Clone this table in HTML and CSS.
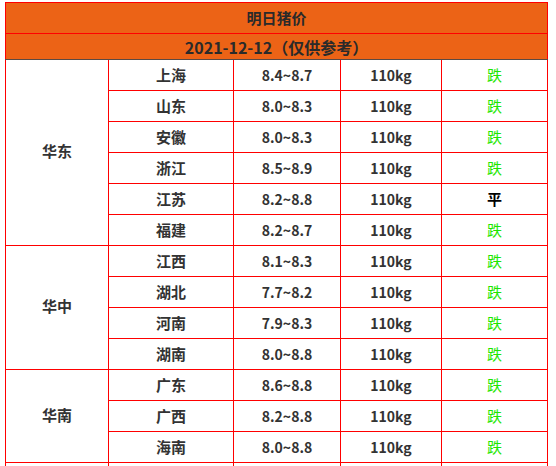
FILE: index.html
```html
<!DOCTYPE html>
<html lang="zh-CN">
<head>
<meta charset="utf-8">
<title>明日猪价</title>
<link rel="stylesheet" href="styles.css">
</head>
<body>
<div class="wrap">
<table class="price">
  <colgroup>
    <col class="c1"><col class="c2"><col class="c3"><col class="c4"><col class="c5">
  </colgroup>
  <thead>
    <tr class="h1"><th colspan="5">明日猪价</th></tr>
    <tr class="h2"><th colspan="5">2021-12-12（仅供参考）</th></tr>
  </thead>
  <tbody>
    <tr><td rowspan="6" class="region">华东</td><td class="prov">上海</td><td>8.4~8.7</td><td>110kg</td><td class="down">跌</td></tr>
    <tr><td class="prov">山东</td><td>8.0~8.3</td><td>110kg</td><td class="down">跌</td></tr>
    <tr><td class="prov">安徽</td><td>8.0~8.3</td><td>110kg</td><td class="down">跌</td></tr>
    <tr><td class="prov">浙江</td><td>8.5~8.9</td><td>110kg</td><td class="down">跌</td></tr>
    <tr><td class="prov">江苏</td><td>8.2~8.8</td><td>110kg</td><td class="flat">平</td></tr>
    <tr><td class="prov">福建</td><td>8.2~8.7</td><td>110kg</td><td class="down">跌</td></tr>
    <tr><td rowspan="4" class="region">华中</td><td class="prov">江西</td><td>8.1~8.3</td><td>110kg</td><td class="down">跌</td></tr>
    <tr><td class="prov">湖北</td><td>7.7~8.2</td><td>110kg</td><td class="down">跌</td></tr>
    <tr><td class="prov">河南</td><td>7.9~8.3</td><td>110kg</td><td class="down">跌</td></tr>
    <tr><td class="prov">湖南</td><td>8.0~8.8</td><td>110kg</td><td class="down">跌</td></tr>
    <tr><td rowspan="3" class="region">华南</td><td class="prov">广东</td><td>8.6~8.8</td><td>110kg</td><td class="down">跌</td></tr>
    <tr><td class="prov">广西</td><td>8.2~8.8</td><td>110kg</td><td class="down">跌</td></tr>
    <tr><td class="prov">海南</td><td>8.0~8.8</td><td>110kg</td><td class="down">跌</td></tr>
    <tr><td rowspan="3" class="region">华北</td><td class="prov">河北</td><td>8.3~8.6</td><td>110kg</td><td class="down">跌</td></tr>
    <tr><td class="prov">山西</td><td>8.0~8.4</td><td>110kg</td><td class="down">跌</td></tr>
    <tr><td class="prov">北京</td><td>8.4~8.7</td><td>110kg</td><td class="down">跌</td></tr>
  </tbody>
</table>
</div>
</body>
</html>
```
FILE: styles.css
```css
html, body {
  margin: 0;
  padding: 0;
  background: #ffffff;
}
.wrap {
  padding: 2px 0 0 5px;
}
.price {
  border-collapse: collapse;
  table-layout: fixed;
  width: 542px;
  font-family: "Noto Sans CJK SC", "Noto Sans", sans-serif;
  font-size: 14px;
  font-weight: bold;
  color: #333333;
}
.c1 { width: 103px; }
.c2 { width: 125px; }
.c3 { width: 107px; }
.c4 { width: 101px; }
.c5 { width: 106px; }
.price th,
.price td {
  border: 1px solid #ff0000;
  padding: 0;
  text-align: center;
  vertical-align: middle;
  line-height: 18px;
}
.price thead th {
  background: #ec6316;
  color: #2a2a2a;
}
.price .h1 th {
  height: 30px;
  font-size: 15px;
}
.price .h2 th {
  height: 25px;
  font-size: 16px;
  border-bottom-color: #5a4a44;
}
.price tbody td { height: 30px; }
.price .region,
.price .prov { font-size: 15px; }
.price .region { padding-bottom: 3px; }
.price .down { color: #1ee600; font-weight: normal; font-size: 15px; }
.price .flat { color: #000000; font-size: 15px; }
```
